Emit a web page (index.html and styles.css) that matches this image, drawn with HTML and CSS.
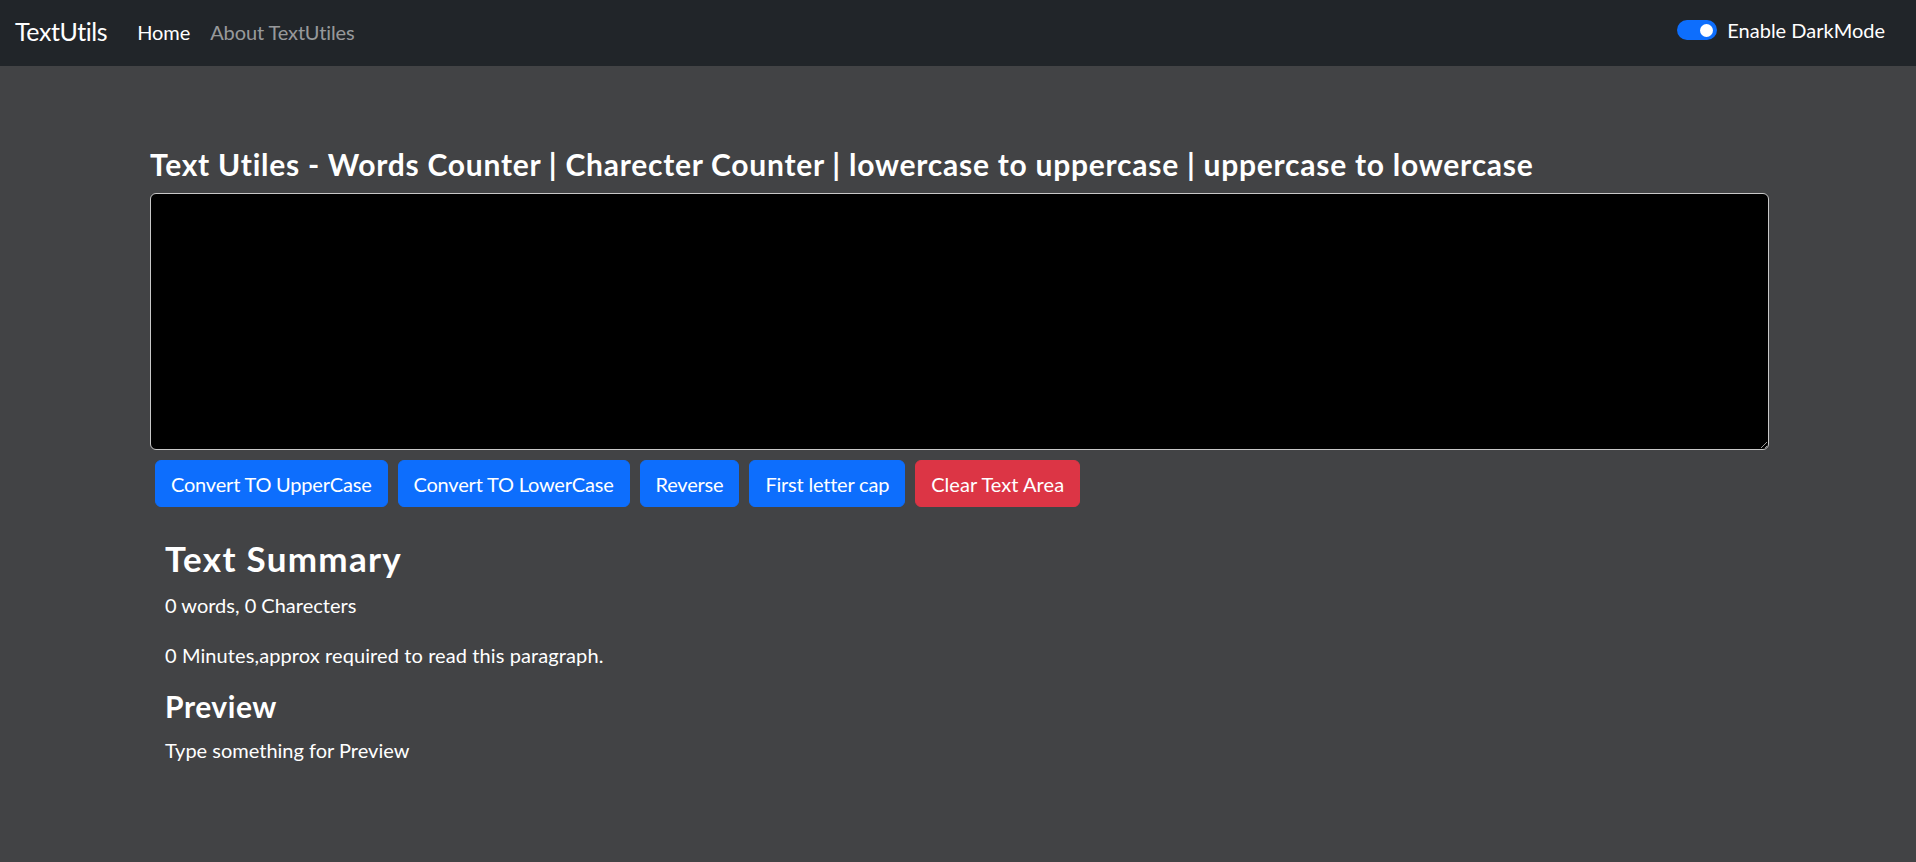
FILE: index.html
```html
<!DOCTYPE html>
<html lang="en">
<head>
<meta charset="utf-8">
<title>TextUtils - Home</title>
<link rel="stylesheet" href="styles.css">
</head>
<body>
<nav class="navbar">
  <div class="nav-left">
    <a class="brand" href="#">TextUtils</a>
    <ul class="nav-links">
      <li><a class="nav-link active" href="#">Home</a></li>
      <li><a class="nav-link" href="#">About TextUtiles</a></li>
    </ul>
  </div>
  <div class="switch-wrap">
    <span class="switch"><span class="knob"></span></span>
    <label class="switch-label">Enable DarkMode</label>
  </div>
</nav>
<main class="page">
  <h1 class="title">Text Utiles - Words Counter | Charecter Counter | lowercase to uppercase | uppercase to lowercase</h1>
  <textarea class="box" rows="8"></textarea>
  <div class="actions">
    <button class="btn btn-primary">Convert TO UpperCase</button>
    <button class="btn btn-primary">Convert TO LowerCase</button>
    <button class="btn btn-primary">Reverse</button>
    <button class="btn btn-primary">First letter cap</button>
    <button class="btn btn-danger">Clear Text Area</button>
  </div>
  <section class="summary">
    <h2 class="summary-title">Text Summary</h2>
    <p class="stat">0 words, 0 Charecters</p>
    <p class="stat stat-last">0 Minutes,approx required to read this paragraph.</p>
    <h3 class="preview-title">Preview</h3>
    <p class="preview">Type something for Preview</p>
  </section>
</main>
</body>
</html>
```

FILE: styles.css
```css
* { box-sizing: border-box; }
html, body { margin: 0; padding: 0; }
body {
  background: #424345;
  color: #ffffff;
  font-family: Lato, "Liberation Sans", sans-serif;
  font-size: 20px;
  line-height: 1.5;
  min-height: 862px;
}

.navbar {
  height: 66px;
  background: #212529;
  display: flex;
  align-items: center;
  justify-content: space-between;
  padding: 0 31px 0 15px;
}
.nav-left { display: flex; align-items: center; }
.brand {
  color: #fff;
  text-decoration: none;
  font-size: 25px;
  line-height: 37px;
  letter-spacing: -0.4px;
  margin-right: 20px;
  margin-top: -3px;
}
.nav-links { display: flex; list-style: none; margin: -2px 0 0 0; padding: 0; }
.nav-link {
  display: block;
  padding: 10px 10px;
  color: rgba(255,255,255,0.55);
  text-decoration: none;
  font-size: 20px;
  line-height: 30px;
  letter-spacing: -0.1px;
}
.nav-link.active { color: #fff; }

.switch-wrap { display: flex; align-items: center; gap: 10px; margin-top: -6px; }
.switch {
  width: 40px;
  height: 20px;
  border-radius: 10px;
  background: #0d6efd;
  display: flex;
  align-items: center;
  justify-content: flex-end;
  padding-right: 4px;
}
.knob { width: 13px; height: 13px; border-radius: 50%; background: #fff; }
.switch-label { font-size: 20px; line-height: 30px; color: #fff; }

.page { padding: 80px 147px 0 150px; }
.title {
  font-size: 30px;
  font-weight: 700;
  line-height: 36px;
  letter-spacing: 0.75px;
  margin: 0 0 11px 0;
  white-space: nowrap;
}
.box {
  display: block;
  width: 1619px;
  height: 257px;
  background: #000;
  color: #fff;
  border: 1px solid #c8c8c8;
  border-radius: 6px;
  padding: 7px 15px;
  font-family: inherit;
  font-size: 20px;
  outline: none;
}
.actions { display: flex; margin-top: 10px; }
.btn {
  font-family: inherit;
  font-size: 20px;
  line-height: 30px;
  letter-spacing: -0.2px;
  padding: 7.5px 15px;
  border: 1px solid transparent;
  border-radius: 6px;
  color: #fff;
  margin: 0 5px;
  cursor: pointer;
}
.btn-primary { background: #0d6efd; border-color: #0d6efd; }
.btn-danger { background: #dc3545; border-color: #dc3545; letter-spacing: 0.05px; }

.summary { margin: 30px 0 0 15px; }
.summary-title {
  font-size: 35px;
  font-weight: 700;
  line-height: 42px;
  letter-spacing: 1.3px;
  margin: 0 0 11px 0;
}
.stat { margin: 0 0 20px 0; }
.stat-last { margin-bottom: 18px; letter-spacing: 0.1px; }
.preview-title {
  font-size: 30px;
  font-weight: 700;
  line-height: 36px;
  letter-spacing: 0.55px;
  margin: 0 0 11px 0;
}
.preview { margin: 0; }
```
